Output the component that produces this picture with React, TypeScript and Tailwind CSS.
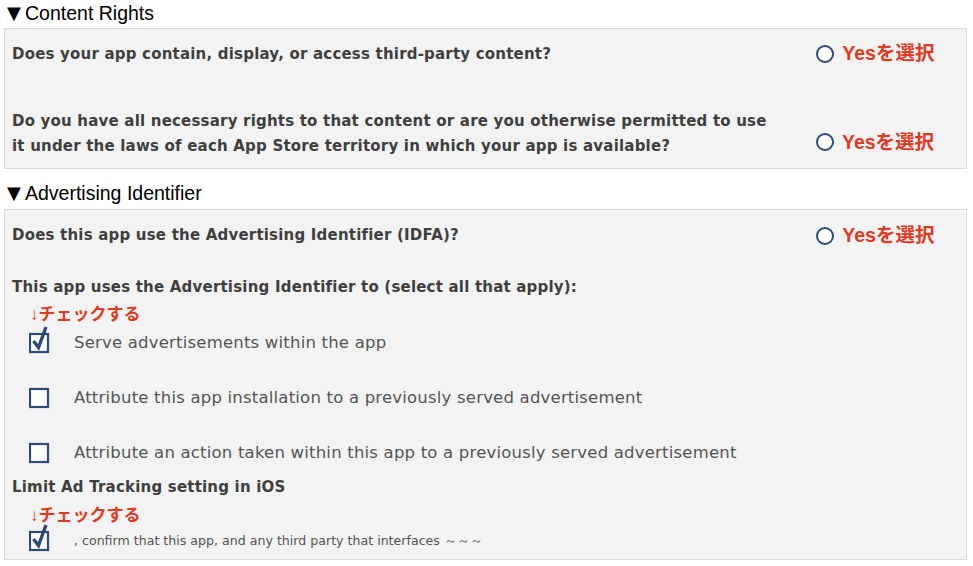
import React from 'react';

const verdana = { fontFamily: '"DejaVu Sans", Verdana, sans-serif' };
const jp = { fontFamily: '"Liberation Sans", "Noto Sans CJK JP", sans-serif' };

const Radio = () => (
  <span className="inline-block h-[18px] w-[18px] rounded-full border-2 border-[#2e4a7a] bg-white shrink-0" />
);

const YesPick = () => (
  <div className="flex items-center gap-[8px] w-[150px]">
    <Radio />
    <span className="text-[19.5px] font-bold text-[#e2391f] leading-none" style={jp}>
      Yesを選択
    </span>
  </div>
);

const Checkbox = ({ checked }: { checked?: boolean }) => (
  <svg width="22" height="36" viewBox="0 0 22 36" className="shrink-0">
    <rect x="1" y="9" width="18" height="18" fill="white" stroke="#2e4a7a" strokeWidth="2.2" />
    {checked && (
      <path d="M4.5 16 L9.5 22.5 L17 2" fill="none" stroke="#2e4a7a" strokeWidth="3.4" />
    )}
  </svg>
);

const Hint = () => (
  <div className="pl-[18px] text-[17px] font-bold text-[#e2391f] leading-[20px]" style={jp}>
    ↓チェックする
  </div>
);

const SectionTitle = ({ title }: { title: string }) => (
  <div
    className="flex items-center pl-[7px] text-[19.5px] leading-[24px] text-black"
    style={{ fontFamily: '"Liberation Sans", Arial, sans-serif' }}
  >
    <span className="text-[18px] w-[18px]" style={{ fontFamily: '"DejaVu Sans", sans-serif' }}>▼</span>
    <span>{title}</span>
  </div>
);

const bold = 'text-[15px] font-bold leading-[25px] tracking-[0.2px] text-[#3f3f3f]';
const normal = 'text-[16.5px] text-[#555] tracking-[0.2px]';

export default function App() {
  return (
    <div className="w-[973px] h-[566px] bg-white overflow-hidden text-[#444]" style={verdana}>
      <div className="pt-[1px]">
        <SectionTitle title="Content Rights" />
      </div>

      {/* Content Rights panel */}
      <div className="ml-[4px] mt-[3px] w-[963px] h-[141px] border border-[#dadada] bg-[#f3f3f3] pl-[7px]">
        <div className="flex items-center h-[50px]">
          <p className={`w-[806px] ${bold}`}>Does your app contain, display, or access third-party content?</p>
          <YesPick />
        </div>
        <div className="flex items-end mt-[30px]">
          <p className={`w-[806px] ${bold}`}>
            Do you have all necessary rights to that content or are you otherwise permitted to use
            <br />
            it under the laws of each App Store territory in which your app is available?
          </p>
          <div className="pb-[7px]">
            <YesPick />
          </div>
        </div>
      </div>

      <div className="mt-[12px]">
        <SectionTitle title="Advertising Identifier" />
      </div>

      {/* Advertising Identifier panel */}
      <div className="ml-[4px] mt-[4px] w-[963px] h-[351px] border border-[#dadada] bg-[#f3f3f3] pl-[7px]">
        <div className="flex items-center mt-[13px] h-[25px]">
          <p className={`w-[806px] ${bold}`}>Does this app use the Advertising Identifier (IDFA)?</p>
          <YesPick />
        </div>
        <p className={`mt-[27px] ${bold}`}>This app uses the Advertising Identifier to (select all that apply):</p>
        <div className="mt-[5px]">
          <Hint />
        </div>
        <div className="flex items-center h-[36px] pl-[17px]">
          <Checkbox checked />
          <span className={`ml-[23px] ${normal}`}>Serve advertisements within the app</span>
        </div>
        <div className="flex items-center h-[36px] pl-[17px] mt-[19px]">
          <Checkbox />
          <span className={`ml-[23px] ${normal}`}>
            Attribute this app installation to a previously served advertisement
          </span>
        </div>
        <div className="flex items-center h-[36px] pl-[17px] mt-[19px]">
          <Checkbox />
          <span className={`ml-[23px] ${normal}`}>
            Attribute an action taken within this app to a previously served advertisement
          </span>
        </div>
        <p className={`mt-[4px] ${bold}`}>Limit Ad Tracking setting in iOS</p>
        <div className="mt-[6px]">
          <Hint />
        </div>
        <div className="flex items-center h-[36px] pl-[17px] -mt-[3px]">
          <Checkbox checked />
          <span className="ml-[23px] text-[12.6px] text-[#555]">
            , confirm that this app, and any third party that interfaces ～～～
          </span>
        </div>
      </div>
    </div>
  );
}
